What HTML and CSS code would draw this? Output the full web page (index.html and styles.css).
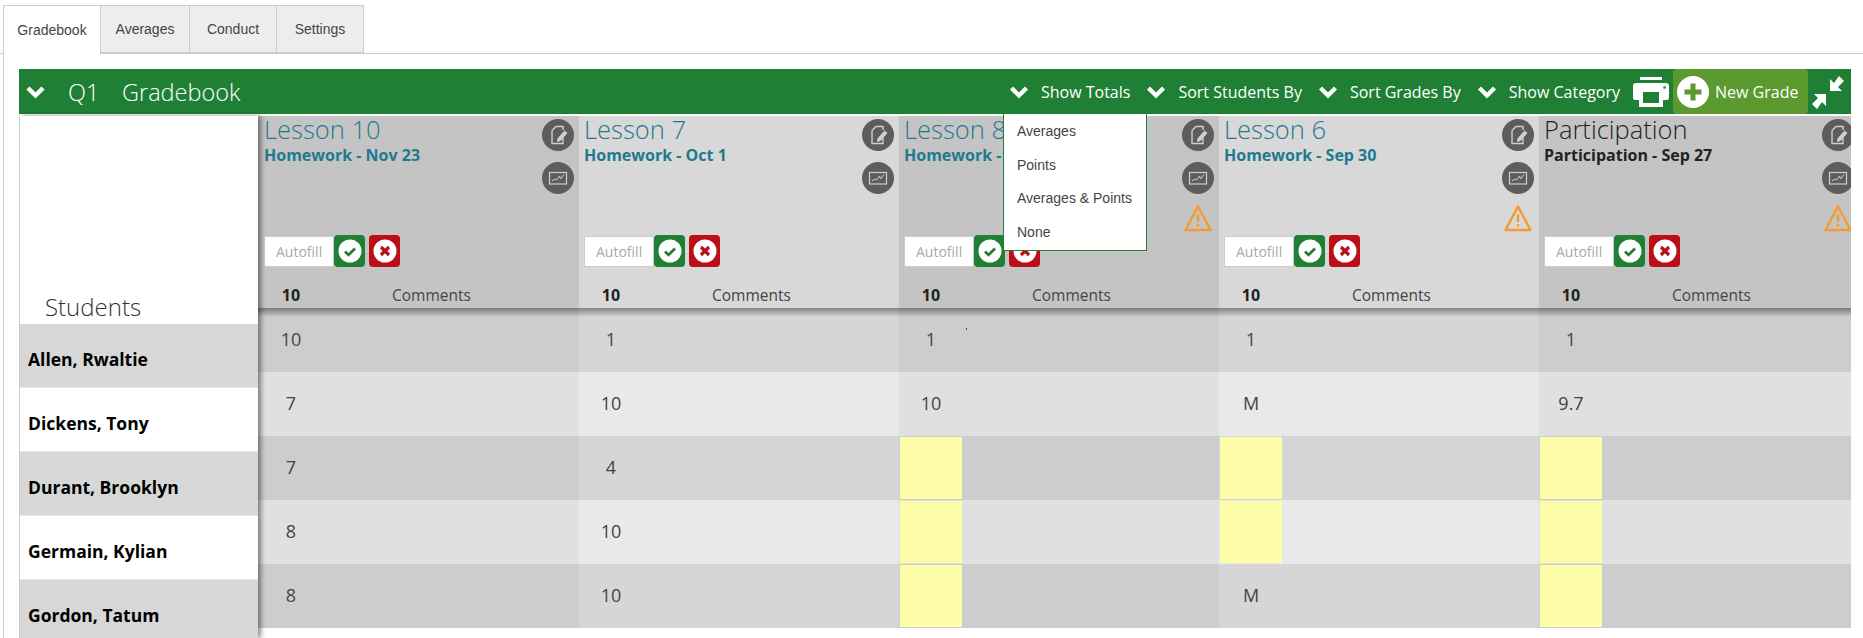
FILE: index.html
```html
<!DOCTYPE html>
<html lang="en">
<head>
    <meta charset="UTF-8">
    <title>Gradebook</title>
    <link rel="stylesheet" href="styles.css">
</head>
<body>
    <svg class="sprites" width="0" height="0">
        <symbol id="chevron" viewBox="0 0 20 14">
            <path d="M2.500 3 L10 10.500 L17.500 3" fill="none" stroke="currentColor" stroke-width="4.400"/>
        </symbol>
        <symbol id="edit" viewBox="0 0 32 32">
            <path d="M10 11.500L14 7.500H21V11M10 11.500V24.500H21V19" fill="none" stroke="#d0d0d0" stroke-width="1.400"/>
            <path d="M15.500 19.500L22.500 11.500L25.500 14L18.500 22L15 23Z" fill="#d0d0d0"/>
        </symbol>
        <symbol id="chart" viewBox="0 0 32 32">
            <rect x="7.500" y="10.500" width="17" height="11.500" fill="none" stroke="#cfcfcf" stroke-width="1.200"/>
            <path d="M10 19l3-2 1.500 1 3-4 1 3 3.500-4.500" fill="none" stroke="#cfcfcf" stroke-width="1"/>
        </symbol>
        <symbol id="warn" viewBox="0 0 28 28">
            <path d="M14 2.500 L26.500 26 H1.500 Z" fill="none" stroke="#f79a2e" stroke-width="2.400" stroke-linejoin="round"/>
            <path d="M14 10.500v7.500M14 20v2.500" fill="none" stroke="#f79a2e" stroke-width="2.400"/>
        </symbol>
        <symbol id="ok" viewBox="0 0 24 24">
            <circle cx="12" cy="12" r="11.500" fill="#fff"/>
            <path d="M7 12.500l3.500 3.500 6.500-6.500" fill="none" stroke="#1f7f35" stroke-width="2.600"/>
        </symbol>
        <symbol id="cancel" viewBox="0 0 24 24">
            <circle cx="12" cy="12" r="11.500" fill="#fff"/>
            <path d="M8 8l8 8M16 8l-8 8" fill="none" stroke="#bd0d17" stroke-width="3.200"/>
        </symbol>
    </svg>

    <nav class="tabs">
        <a class="tab active">Gradebook</a>
        <a class="tab">Averages</a>
        <a class="tab">Conduct</a>
        <a class="tab">Settings</a>
    </nav>

    <main class="panel">
        <header class="bar">
            <svg class="chevron first"><use href="#chevron"/></svg>
            <span class="bar-title quarter">Q1</span>
            <span class="bar-title">Gradebook</span>

            <div class="bar-tools">
                <div class="tool"><svg class="chevron"><use href="#chevron"/></svg>Show Totals</div>
                <div class="tool"><svg class="chevron"><use href="#chevron"/></svg>Sort Students By</div>
                <div class="tool"><svg class="chevron"><use href="#chevron"/></svg>Sort Grades By</div>
                <div class="tool"><svg class="chevron"><use href="#chevron"/></svg>Show Category</div>
                <svg class="print" viewBox="0 0 36 30">
                    <path d="M7 0h22v3H7z" fill="#fff"/>
                    <path d="M3 6h30a3 3 0 0 1 3 3v12a2 2 0 0 1-2 2h-4v7H6v-7H2a2 2 0 0 1-2-2V9a3 3 0 0 1 3-3z" fill="#fff"/>
                    <rect x="10" y="15" width="16" height="11" fill="#1f7f35"/>
                    <circle cx="31.500" cy="10.500" r="1.300" fill="#1f7f35"/>
                </svg>
                <button class="new-grade">
                    <svg class="plus" viewBox="0 0 32 32">
                        <circle cx="16" cy="16" r="16" fill="#fff"/>
                        <path d="M16 7.500v17M7.500 16h17" stroke="#5a9a2e" stroke-width="5"/>
                    </svg>
                    New Grade
                </button>
                <svg class="compress" viewBox="0 0 34 34">
                    <path d="M28 1l5 5-6 6 4 4H19V4l4 4z" fill="#fff"/>
                    <path d="M6 34l-5-5 6-6-4-4h12v12l-4-4z" fill="#fff"/>
                </svg>
            </div>

            <ul class="menu">
                <li>Averages</li>
                <li>Points</li>
                <li>Averages &amp; Points</li>
                <li>None</li>
            </ul>
        </header>

        <div class="board">
            <aside class="students">
                <h2>Students</h2>
                <div class="student">Allen, Rwaltie</div>
                <div class="student">Dickens, Tony</div>
                <div class="student">Durant, Brooklyn</div>
                <div class="student">Germain, Kylian</div>
                <div class="student">Gordon, Tatum</div>
            </aside>

            <section class="col dark">
                <div class="col-head">
                    <div class="col-info">
                        <h3>Lesson 10</h3>
                        <p>Homework - Nov 23</p>
                    </div>
                    <div class="col-icons">
                        <svg class="round"><use href="#edit"/></svg>
                        <svg class="round"><use href="#chart"/></svg>
                    </div>
                    <div class="autofill">
                        <input placeholder="Autofill">
                        <span class="btn green"><svg><use href="#ok"/></svg></span>
                        <span class="btn red"><svg><use href="#cancel"/></svg></span>
                    </div>
                    <div class="col-foot"><b>10</b><span>Comments</span></div>
                </div>
                <div class="cell"><span class="grade">10</span></div>
                <div class="cell"><span class="grade">7</span></div>
                <div class="cell"><span class="grade">7</span></div>
                <div class="cell"><span class="grade">8</span></div>
                <div class="cell"><span class="grade">8</span></div>
            </section>

            <section class="col">
                <div class="col-head">
                    <div class="col-info">
                        <h3>Lesson 7</h3>
                        <p>Homework - Oct 1</p>
                    </div>
                    <div class="col-icons">
                        <svg class="round"><use href="#edit"/></svg>
                        <svg class="round"><use href="#chart"/></svg>
                    </div>
                    <div class="autofill">
                        <input placeholder="Autofill">
                        <span class="btn green"><svg><use href="#ok"/></svg></span>
                        <span class="btn red"><svg><use href="#cancel"/></svg></span>
                    </div>
                    <div class="col-foot"><b>10</b><span>Comments</span></div>
                </div>
                <div class="cell"><span class="grade">1</span></div>
                <div class="cell"><span class="grade">10</span></div>
                <div class="cell"><span class="grade">4</span></div>
                <div class="cell"><span class="grade">10</span></div>
                <div class="cell"><span class="grade">10</span></div>
            </section>

            <section class="col dark">
                <div class="col-head">
                    <div class="col-info">
                        <h3>Lesson 8</h3>
                        <p>Homework - Oct 1</p>
                    </div>
                    <div class="col-icons">
                        <svg class="round"><use href="#edit"/></svg>
                        <svg class="round"><use href="#chart"/></svg>
                        <svg class="warn"><use href="#warn"/></svg>
                    </div>
                    <div class="autofill">
                        <input placeholder="Autofill">
                        <span class="btn green"><svg><use href="#ok"/></svg></span>
                        <span class="btn red"><svg><use href="#cancel"/></svg></span>
                    </div>
                    <div class="col-foot"><b>10</b><span>Comments</span></div>
                </div>
                <div class="cell"><span class="grade">1</span><i class="speck"></i></div>
                <div class="cell"><span class="grade">10</span></div>
                <div class="cell"><span class="grade missing"></span></div>
                <div class="cell"><span class="grade missing"></span></div>
                <div class="cell"><span class="grade missing"></span></div>
            </section>

            <section class="col">
                <div class="col-head">
                    <div class="col-info">
                        <h3>Lesson 6</h3>
                        <p>Homework - Sep 30</p>
                    </div>
                    <div class="col-icons">
                        <svg class="round"><use href="#edit"/></svg>
                        <svg class="round"><use href="#chart"/></svg>
                        <svg class="warn"><use href="#warn"/></svg>
                    </div>
                    <div class="autofill">
                        <input placeholder="Autofill">
                        <span class="btn green"><svg><use href="#ok"/></svg></span>
                        <span class="btn red"><svg><use href="#cancel"/></svg></span>
                    </div>
                    <div class="col-foot"><b>10</b><span>Comments</span></div>
                </div>
                <div class="cell"><span class="grade">1</span></div>
                <div class="cell"><span class="grade">M</span></div>
                <div class="cell"><span class="grade missing"></span></div>
                <div class="cell"><span class="grade missing"></span></div>
                <div class="cell"><span class="grade">M</span></div>
            </section>

            <section class="col dark">
                <div class="col-head">
                    <div class="col-info other">
                        <h3>Participation</h3>
                        <p>Participation - Sep 27</p>
                    </div>
                    <div class="col-icons">
                        <svg class="round"><use href="#edit"/></svg>
                        <svg class="round"><use href="#chart"/></svg>
                        <svg class="warn"><use href="#warn"/></svg>
                    </div>
                    <div class="autofill">
                        <input placeholder="Autofill">
                        <span class="btn green"><svg><use href="#ok"/></svg></span>
                        <span class="btn red"><svg><use href="#cancel"/></svg></span>
                    </div>
                    <div class="col-foot"><b>10</b><span>Comments</span></div>
                </div>
                <div class="cell"><span class="grade">1</span></div>
                <div class="cell"><span class="grade">9.7</span></div>
                <div class="cell"><span class="grade missing"></span></div>
                <div class="cell"><span class="grade missing"></span></div>
                <div class="cell"><span class="grade missing"></span></div>
            </section>
        </div>
    </main>
</body>
</html>
```

FILE: styles.css
```css
* {
    margin: 0;
    padding: 0;
    box-sizing: border-box;
}

html, body {
    height: 638px;
    overflow: hidden;
}

body {
    font-family: 'Open Sans', sans-serif;
    background: #fff;
    color: #333;
}

.sprites {
    position: absolute;
}

/* tabs */

.tabs {
    display: flex;
    height: 54px;
    padding: 5px 0 0 3px;
    border-bottom: 1px solid #ccc;
}

.tab {
    display: flex;
    align-items: center;
    justify-content: center;
    height: 48px;
    width: 89px;
    background: #ededed;
    border: 1px solid #ccc;
    border-left: 0;
    font-family: 'Liberation Sans', sans-serif;
    font-size: 14px;
    color: #444;
}

.tab.active {
    width: 98px;
    height: 49px;
    background: #fff;
    border-left: 1px solid #ccc;
    border-bottom: 0;
}

.tab:nth-child(3), .tab:nth-child(4) {
    width: 87px;
}

/* panel */

.panel {
    margin-left: 3px;
    height: 584px;
    padding: 15px 12px 0 15px;
    border-left: 1px solid #ccc;
}

.bar {
    position: relative;
    display: flex;
    align-items: center;
    height: 45px;
    background: #1f7f35;
    color: #fff;
}

.chevron {
    width: 20px;
    height: 14px;
    color: #fff;
}

.chevron.first {
    width: 21px;
    margin-left: 6px;
    margin-right: 22px;
}

.bar-title {
    font-size: 23.500px;
    font-weight: 300;
}

.bar-title.quarter {
    width: 54px;
}

.bar-tools {
    display: flex;
    align-items: center;
    height: 100%;
    margin-left: auto;
    margin-right: 6px;
}

.tool {
    display: flex;
    align-items: center;
    gap: 12px;
    margin-right: 16px;
    font-size: 16px;
    white-space: nowrap;
}

.print {
    width: 36px;
    height: 30px;
    margin-left: -3px;
    margin-right: 4px;
}

.new-grade {
    display: flex;
    align-items: center;
    gap: 6px;
    width: 135px;
    height: 45px;
    padding-left: 4px;
    background: #5a9a2e;
    border: 0;
    border-radius: 4px;
    color: #fff;
    font-family: inherit;
    font-size: 16px;
}

.plus {
    width: 32px;
    height: 32px;
}

.compress {
    width: 34px;
    height: 34px;
    margin-left: 3px;
    margin-top: 1px;
}

.menu {
    position: absolute;
    top: 45px;
    left: 984px;
    z-index: 5;
    width: 144px;
    height: 137px;
    list-style: none;
    background: #fff;
    border: 1px solid #1f7f35;
    border-top: 0;
    font-family: 'Liberation Sans', sans-serif;
    font-size: 14px;
    color: #444;
}

.menu li {
    height: 33.700px;
    line-height: 34px;
    padding-left: 13px;
}

/* board */

.board {
    display: flex;
    margin-top: 2px;
    overflow-x: clip;
    height: 522px;
}

.students {
    position: relative;
    z-index: 3;
    flex: none;
    width: 239px;
    background: #fff;
    border-left: 1px solid #ccc;
    box-shadow: 3px 0 5px rgba(0, 0, 0, 0.45);
}

.students h2 {
    height: 208px;
    padding: 174px 0 0 25px;
    font-size: 24px;
    font-weight: 300;
    color: #333;
}

.student {
    height: 64px;
    padding: 23px 0 0 8px;
    border-bottom: 1px solid #e6e6e6;
    font-size: 17.500px;
    font-weight: 700;
    color: #000;
}

.student:nth-of-type(odd) {
    background: #d7d7d7;
}

.col {
    flex: none;
    width: 320px;
    background: #fff;
}

.col:first-of-type {
    width: 321px;
}

.col:first-of-type .col-head {
    padding-left: 6px;
}

.col:first-of-type .cell {
    padding-left: 1px;
}

.col-head {
    position: relative;
    z-index: 2;
    height: 192px;
    padding: 0 0 0 5px;
    background: #d8d8d8;
}

.col-head::after {
    content: "";
    position: absolute;
    top: 100%;
    left: 0;
    right: 0;
    height: 9px;
    background: linear-gradient(rgba(0, 0, 0, 0.4), rgba(0, 0, 0, 0));
}

.col.dark .col-head {
    background: #c4c4c4;
}

.col-info {
    height: 119px;
    color: #1f7a8f;
}

.col-info.other {
    color: #222;
}

.col-info h3 {
    font-size: 25.500px;
    font-weight: 300;
    line-height: 27px;
}

.col-info p {
    padding-top: 2px;
    font-size: 16px;
    font-weight: 700;
    line-height: 20px;
}

.col-icons {
    position: absolute;
    top: 3px;
    right: 5px;
    display: flex;
    flex-direction: column;
    align-items: center;
    gap: 11px;
}

.round {
    width: 32px;
    height: 32px;
    border-radius: 50%;
    background: #5d5d5d;
}

.warn {
    width: 28px;
    height: 28px;
    margin-top: -1px;
}

.autofill {
    display: flex;
    align-items: center;
    height: 32px;
}

.autofill input {
    width: 70px;
    height: 31px;
    padding-left: 11px;
    background: #fff;
    border: 1px solid #ccc;
    font-family: inherit;
    font-size: 14px;
}

.autofill input::placeholder {
    color: #aaa;
    opacity: 1;
}

.btn {
    display: flex;
    align-items: center;
    justify-content: center;
    width: 31px;
    height: 32px;
    border-radius: 4px;
}

.btn svg {
    width: 24px;
    height: 24px;
}

.btn.green {
    background: #1f7f35;
    margin-right: 4px;
}

.btn.red {
    background: #bd0d17;
}

.col-foot {
    display: flex;
    align-items: center;
    height: 41px;
    padding-top: 15px;
    font-size: 16px;
    margin-left: -5px;
}

.col-foot b {
    width: 64px;
    text-align: center;
    color: #222;
}

.col-foot span {
    margin-left: 69px;
    font-size: 15.500px;
    color: #444;
}

.cell {
    position: relative;
    display: flex;
    height: 64px;
    background: #e9e9e9;
}

.cell:nth-of-type(even) {
    background: #d6d6d6;
}

.col.dark .cell {
    background: #e0e0e0;
}

.col.dark .cell:nth-of-type(even) {
    background: #cdcdcd;
}

.grade {
    width: 64px;
    line-height: 62px;
    text-align: center;
    font-size: 18px;
    color: #444;
}

.grade.missing {
    width: 62px;
    height: 62px;
    margin: 1px;
    background: #fdfdaa;
}

.speck {
    position: absolute;
    top: 20px;
    left: 67px;
    width: 1px;
    height: 2px;
    background: #444;
}
```
